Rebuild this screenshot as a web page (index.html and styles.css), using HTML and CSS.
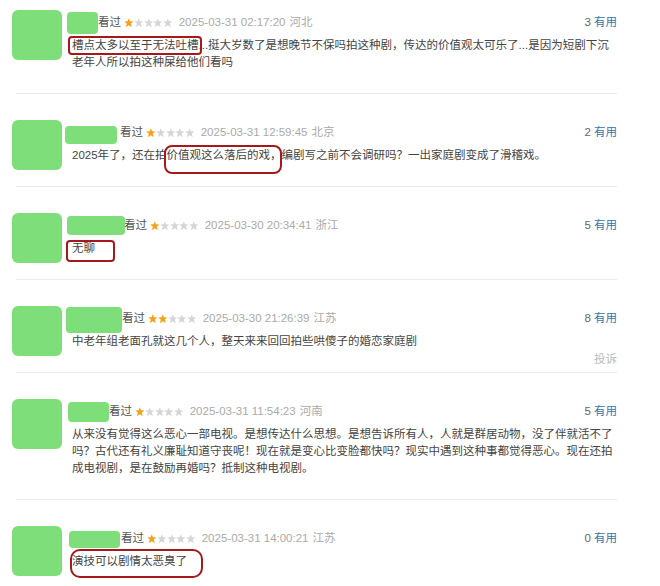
FILE: index.html
```html
<!DOCTYPE html>
<html lang="zh-CN">
<head>
  <meta charset="UTF-8">
  <meta name="viewport" content="width=device-width, initial-scale=1.0">
  <title>短评</title>
  <link rel="stylesheet" href="styles.css">
</head>
<body>
  <svg class="sprite" xmlns="http://www.w3.org/2000/svg">
    <symbol id="star" viewBox="0 0 10 10">
      <path d="M5 0.2L6.25 3.5L9.9 3.6L7.05 5.85L8.1 9.6L5 7.45L1.9 9.6L2.95 5.85L0.1 3.6L3.75 3.5Z"/>
    </symbol>
  </svg>

  <div class="comments">
    <div class="comment">
      <div class="avatar"></div>
      <div class="comment-body">
        <div class="comment-info">
          <div class="meta">
            <span class="name name-1"></span>
            <span class="status">看过</span>
            <span class="stars">
              <svg class="star on"><use href="#star"/></svg><svg class="star"><use href="#star"/></svg><svg class="star"><use href="#star"/></svg><svg class="star"><use href="#star"/></svg><svg class="star"><use href="#star"/></svg>
            </span>
            <span class="time">2025-03-31 02:17:20</span>
            <span class="ip">河北</span>
          </div>
          <div class="votes"><span class="vote-count">3</span> <a class="vote-link">有用</a></div>
        </div>
        <p class="comment-text"><span class="mark mark-1">槽点太多以至于无法吐槽</span>...挺大岁数了是想晚节不保吗拍这种剧，传达的价值观太可乐了...是因为短剧下沉老年人所以拍这种屎给他们看吗</p>
        <div class="actions"></div>
      </div>
    </div>
    <div class="divider"></div>

    <div class="comment">
      <div class="avatar"></div>
      <div class="comment-body">
        <div class="comment-info">
          <div class="meta">
            <span class="name name-2"></span>
            <span class="status">看过</span>
            <span class="stars">
              <svg class="star on"><use href="#star"/></svg><svg class="star"><use href="#star"/></svg><svg class="star"><use href="#star"/></svg><svg class="star"><use href="#star"/></svg><svg class="star"><use href="#star"/></svg>
            </span>
            <span class="time">2025-03-31 12:59:45</span>
            <span class="ip">北京</span>
          </div>
          <div class="votes"><span class="vote-count">2</span> <a class="vote-link">有用</a></div>
        </div>
        <p class="comment-text">2025年了，还在拍<span class="mark mark-2">价值观这么落后的戏，</span>编剧写之前不会调研吗？一出家庭剧变成了滑稽戏。</p>
        <div class="actions"></div>
      </div>
    </div>
    <div class="divider"></div>

    <div class="comment">
      <div class="avatar"></div>
      <div class="comment-body">
        <div class="comment-info">
          <div class="meta">
            <span class="name name-3"></span>
            <span class="status">看过</span>
            <span class="stars">
              <svg class="star on"><use href="#star"/></svg><svg class="star"><use href="#star"/></svg><svg class="star"><use href="#star"/></svg><svg class="star"><use href="#star"/></svg><svg class="star"><use href="#star"/></svg>
            </span>
            <span class="time">2025-03-30 20:34:41</span>
            <span class="ip">浙江</span>
          </div>
          <div class="votes"><span class="vote-count">5</span> <a class="vote-link">有用</a></div>
        </div>
        <p class="comment-text"><span class="mark mark-3">无聊</span></p>
        <div class="actions"></div>
      </div>
    </div>
    <div class="divider"></div>

    <div class="comment">
      <div class="avatar"></div>
      <div class="comment-body">
        <div class="comment-info">
          <div class="meta">
            <span class="name name-4"></span>
            <span class="status">看过</span>
            <span class="stars">
              <svg class="star on"><use href="#star"/></svg><svg class="star on"><use href="#star"/></svg><svg class="star"><use href="#star"/></svg><svg class="star"><use href="#star"/></svg><svg class="star"><use href="#star"/></svg>
            </span>
            <span class="time">2025-03-30 21:26:39</span>
            <span class="ip">江苏</span>
          </div>
          <div class="votes"><span class="vote-count">8</span> <a class="vote-link">有用</a></div>
        </div>
        <p class="comment-text">中老年组老面孔就这几个人，整天来来回回拍些哄傻子的婚恋家庭剧</p>
        <div class="actions"><a class="report">投诉</a></div>
      </div>
    </div>
    <div class="divider"></div>

    <div class="comment">
      <div class="avatar"></div>
      <div class="comment-body">
        <div class="comment-info">
          <div class="meta">
            <span class="name name-5"></span>
            <span class="status">看过</span>
            <span class="stars">
              <svg class="star on"><use href="#star"/></svg><svg class="star"><use href="#star"/></svg><svg class="star"><use href="#star"/></svg><svg class="star"><use href="#star"/></svg><svg class="star"><use href="#star"/></svg>
            </span>
            <span class="time">2025-03-31 11:54:23</span>
            <span class="ip">河南</span>
          </div>
          <div class="votes"><span class="vote-count">5</span> <a class="vote-link">有用</a></div>
        </div>
        <p class="comment-text">从来没有觉得这么恶心一部电视。是想传达什么思想。是想告诉所有人，人就是群居动物，没了伴就活不了吗？古代还有礼义廉耻知道守丧呢！现在就是变心比变脸都快吗？现实中遇到这种事都觉得恶心。现在还拍成电视剧，是在鼓励再婚吗？抵制这种电视剧。</p>
        <div class="actions"></div>
      </div>
    </div>
    <div class="divider"></div>

    <div class="comment">
      <div class="avatar"></div>
      <div class="comment-body">
        <div class="comment-info">
          <div class="meta">
            <span class="name name-6"></span>
            <span class="status">看过</span>
            <span class="stars">
              <svg class="star on"><use href="#star"/></svg><svg class="star"><use href="#star"/></svg><svg class="star"><use href="#star"/></svg><svg class="star"><use href="#star"/></svg><svg class="star"><use href="#star"/></svg>
            </span>
            <span class="time">2025-03-31 14:00:21</span>
            <span class="ip">江苏</span>
          </div>
          <div class="votes"><span class="vote-count">0</span> <a class="vote-link">有用</a></div>
        </div>
        <p class="comment-text"><span class="mark mark-6">演技可以剧情太恶臭了</span></p>
        <div class="actions"></div>
      </div>
    </div>
  </div>
</body>
</html>
```

FILE: styles.css
```css
body {
  margin: 0;
  background: #fff;
  font-family: "Liberation Sans", Arial, "Noto Sans CJK SC", sans-serif;
  font-size: 11.5px;
  color: #444;
}
.sprite {
  display: none;
}
.comments {
  width: 605px;
  margin-left: 12px;
  padding-top: 10px;
}
.comment {
  display: flex;
  align-items: flex-start;
}
.avatar {
  flex-shrink: 0;
  width: 50px;
  height: 50px;
  margin-right: 10px;
  background: #7edf7a;
  border-radius: 6px;
}
.comment-body {
  flex: 1;
  min-width: 0;
  padding-top: 2px;
  padding-bottom: 4px;
}
.comment-info {
  display: flex;
  justify-content: space-between;
  align-items: center;
  height: 20px;
  line-height: 20px;
}
.meta {
  display: flex;
  align-items: center;
  white-space: nowrap;
}
.name {
  display: block;
  background: #7edf7a;
  border-radius: 4px;
  position: relative;
}
.name-1 { width: 31px; height: 22px; margin-left: -5px; top: 1px; }
.name-2 { width: 52px; height: 18px; margin-left: -7px; margin-right: 3px; top: 3px; }
.name-3 { width: 58px; height: 19px; margin-left: -5px; margin-right: -1px; top: 0; }
.name-4 { width: 56px; height: 26px; margin-left: -6px; top: 2px; }
.name-5 { width: 41px; height: 20px; margin-left: -4px; top: 1px; }
.name-6 { width: 51px; height: 17px; margin-left: -3px; margin-right: 1px; top: 1px; }
.status {
  color: #555;
}
.stars {
  display: flex;
  gap: 0.2px;
  margin: 1px 6px 0 3px;
}
.star {
  width: 9.6px;
  height: 9.6px;
  fill: #d6d6d6;
}
.star.on {
  fill: #f5a11a;
}
.time {
  color: #aaa;
  margin-right: 4px;
}
.ip {
  color: #aaa;
}
.votes {
  color: #666;
  white-space: nowrap;
}
.vote-link {
  color: #37a;
  text-decoration: none;
}
.comment-text {
  margin: 5px 0 0 0;
  line-height: 17px;
}
.actions {
  height: 18px;
  line-height: 18px;
  text-align: right;
}
.report {
  color: #bbb;
}
.divider {
  border-top: 1px solid #ebebeb;
  margin: 0 0 26px 4px;
}
.mark {
  display: inline-block;
  position: relative;
}
.mark::after {
  content: "";
  position: absolute;
  border: 2px solid #a5191c;
}
.mark-1::after { top: -1px; bottom: -1px; left: -4px; right: -3px; border-radius: 4px; }
.mark-2::after { top: -2px; bottom: -10px; left: -3px; right: 0; border-radius: 8px; }
.mark-3::after { top: 0; bottom: -5px; left: -6px; right: -20px; border-radius: 4px; }
.mark-6::after { top: -4px; bottom: -8px; left: -2px; right: -16px; border-radius: 10px; }
```
